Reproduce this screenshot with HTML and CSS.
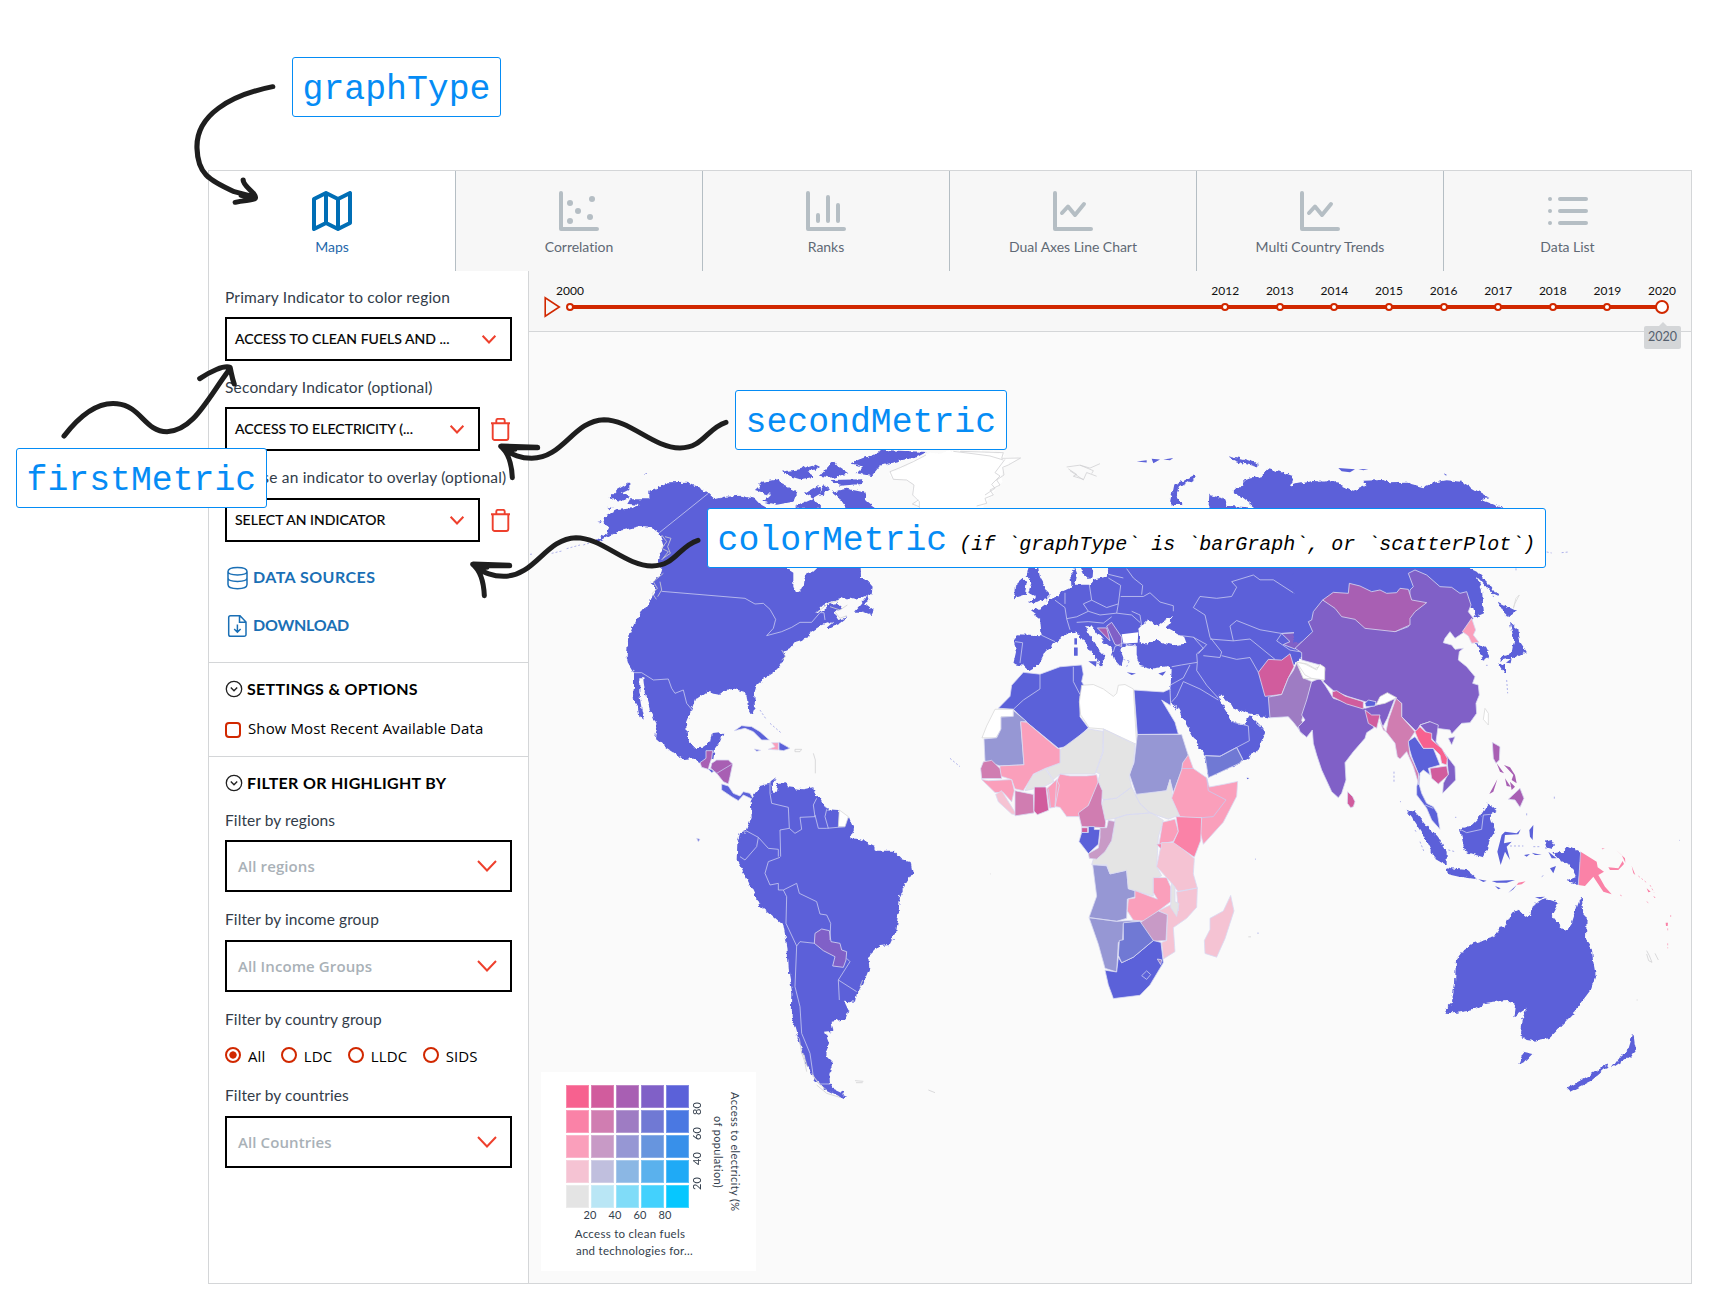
FILE: index.html
```html
<!DOCTYPE html>
<html lang="en">
<head>
<meta charset="utf-8">
<title>Data Explorer</title>
<link rel="stylesheet" href="styles.css">
</head>
<body>
<svg width="0" height="0" class="defs">
  <defs>
    <symbol id="chev" viewBox="0 0 20 12"><path d="M1 1 L10 10.5 L19 1" fill="none" stroke="#ee402d" stroke-width="2"/></symbol>
    <symbol id="chevs" viewBox="0 0 20 12"><path d="M1.500 1 L10 10 L18.500 1" fill="none" stroke="#ee402d" stroke-width="2.700"/></symbol>
    <symbol id="trash" viewBox="0 0 20 23"><path d="M0.5 5.2H19.5M2.2 5.2V20a2 2 0 0 0 2 2H15.8a2 2 0 0 0 2-2V5.2M5.8 5V2.5a1.6 1.6 0 0 1 1.6-1.6H12.6a1.6 1.6 0 0 1 1.6 1.6V5" fill="none" stroke="#ee402d" stroke-width="1.900"/></symbol>
    <symbol id="fold" viewBox="0 0 18 18"><circle cx="9" cy="9" r="7.7" fill="none" stroke="#222" stroke-width="1.3"/><path d="M5.8 7.5 L9 10.7 L12.2 7.5" fill="none" stroke="#222" stroke-width="1.4"/></symbol>
    <symbol id="line" viewBox="0 0 40 40"><path d="M2 2V38H38M9 22L15 15.500L22 24L31 13" fill="none" stroke="#b5bec4" stroke-width="4" stroke-linecap="round" stroke-linejoin="round"/></symbol>
  </defs>
</svg>

<main class="frame">
  <nav class="tabs">
    <a class="tab on"><svg viewBox="0 0 40 40"><path d="M2 8 L14 2 L26 8 L38 2 V32 L26 38 L14 32 L2 38 Z M14 2V32M26 8V38" fill="none" stroke="#006eb5" stroke-width="4" stroke-linejoin="round"/></svg><span>Maps</span></a>
    <a class="tab"><svg viewBox="0 0 40 40"><path d="M2 2V38H38" fill="none" stroke="#b5bec4" stroke-width="4" stroke-linecap="round" stroke-linejoin="round"/><g fill="#b5bec4"><circle cx="11" cy="12" r="3"/><circle cx="33" cy="8" r="3"/><circle cx="19" cy="20" r="3"/><circle cx="31" cy="26" r="3"/><circle cx="11" cy="30" r="3"/></g></svg><span>Correlation</span></a>
    <a class="tab"><svg viewBox="0 0 40 40"><path d="M2 2V38H38M12 24V30M22 6V30M32 14V30" fill="none" stroke="#b5bec4" stroke-width="4" stroke-linecap="round" stroke-linejoin="round"/></svg><span>Ranks</span></a>
    <a class="tab"><svg><use href="#line"/></svg><span>Dual Axes Line Chart</span></a>
    <a class="tab"><svg><use href="#line"/></svg><span>Multi Country Trends</span></a>
    <a class="tab"><svg viewBox="0 0 40 40"><path d="M12 8H38M12 20H38M12 32H38M2 8h.01M2 20h.01M2 32h.01" fill="none" stroke="#b5bec4" stroke-width="4" stroke-linecap="round"/></svg><span>Data List</span></a>
  </nav>

  <div class="body">
    <aside class="side">
      <section class="sec indicators">
        <div class="lbl l1">Primary Indicator to color region</div>
        <div class="sel"><span>ACCESS TO CLEAN FUELS AND ...</span><svg><use href="#chevs"/></svg></div>
        <div class="lbl l2">Secondary Indicator (optional)</div>
        <div class="row"><div class="sel"><span>ACCESS TO ELECTRICITY (...</span><svg><use href="#chevs"/></svg></div><svg class="trash"><use href="#trash"/></svg></div>
        <div class="lbl l3">Choose an indicator to overlay (optional)</div>
        <div class="row third"><div class="sel"><span>SELECT AN INDICATOR</span><svg><use href="#chevs"/></svg></div><svg class="trash"><use href="#trash"/></svg></div>
        <a class="link"><svg viewBox="0 0 24 24"><path d="M3 5.500C3 0 22 0 22 5.500C22 10 3 10 3 5.500V18.500C3 24 22 24 22 18.500V5.500M3 12C3 16.500 22 16.500 22 12" fill="none" stroke="#1a6fb5" stroke-width="1.500"/></svg><span class="k1">DATA SOURCES</span></a>
        <a class="link"><svg viewBox="0 0 24 24"><path d="M5.500 1.800H15L21 8V20.500a1.800 1.800 0 0 1-1.800 1.800H5.500a1.800 1.800 0 0 1-1.800-1.800V3.600a1.800 1.800 0 0 1 1.800-1.800ZM14.500 2V8.300H21M12.400 10.500V18M9.200 15L12.400 18.200L15.600 15" fill="none" stroke="#1a6fb5" stroke-width="1.500"/></svg><span class="k2">DOWNLOAD</span></a>
      </section>
      <section class="sec settings">
        <h2><svg><use href="#fold"/></svg><span>SETTINGS &amp; OPTIONS</span></h2>
        <label class="check"><i></i><span>Show Most Recent Available Data</span></label>
      </section>
      <section class="sec filters">
        <h2><svg><use href="#fold"/></svg><span>FILTER OR HIGHLIGHT BY</span></h2>
        <div class="lbl">Filter by regions</div>
        <div class="sel big"><span>All regions</span><svg><use href="#chev"/></svg></div>
        <div class="lbl">Filter by income group</div>
        <div class="sel big low"><span>All Income Groups</span><svg><use href="#chev"/></svg></div>
        <div class="lbl">Filter by country group</div>
        <div class="radios"><label class="on"><i></i>All</label><label><i></i>LDC</label><label><i></i>LLDC</label><label><i></i>SIDS</label></div>
        <div class="lbl">Filter by countries</div>
        <div class="sel big low"><span>All Countries</span><svg><use href="#chev"/></svg></div>
      </section>
    </aside>

    <div class="main">
      <div class="time">
        <svg class="play" viewBox="0 0 17 22"><path d="M1.200 1.800V20.200L15.300 11Z" fill="none" stroke="#d12800" stroke-width="1.600"/></svg>
        <div class="track">
          <div class="mark" style="left:0%"><b>2000</b><i></i></div>
          <div class="mark" style="left:60%"><b>2012</b><i></i></div>
          <div class="mark" style="left:65%"><b>2013</b><i></i></div>
          <div class="mark" style="left:70%"><b>2014</b><i></i></div>
          <div class="mark" style="left:75%"><b>2015</b><i></i></div>
          <div class="mark" style="left:80%"><b>2016</b><i></i></div>
          <div class="mark" style="left:85%"><b>2017</b><i></i></div>
          <div class="mark" style="left:90%"><b>2018</b><i></i></div>
          <div class="mark" style="left:95%"><b>2019</b><i></i></div>
          <div class="mark now" style="left:100%"><b>2020</b><i></i><em>2020</em></div>
        </div>
      </div>
      <div class="map">
        <svg class="world" viewBox="529 332 1162 951">
          <filter id="coast" x="-5%" y="-5%" width="110%" height="110%"><feTurbulence type="fractalNoise" baseFrequency=".06" numOctaves="3" seed="4"/><feDisplacementMap in="SourceGraphic" scale="16" xChannelSelector="R" yChannelSelector="G"/></filter>
          <!-- North and Central America -->
          <g transform="translate(600 430) scale(.33333)">
            <g class="c5">
              <path class="n" d="M148 182L175 172 205 160 262 158 295 172 325 190 345 208 375 200 425 197 465 207 485 228 500 236 560 300 553 411 580 428 580 470 588 487 600 484 612 460 615 435 640 425 655 411 660 340 700 300 760 400 782 413 783 440 805 455 818 470 815 490 790 500 765 510 740 503 700 513 670 525 645 550 665 540 690 522 712 520 725 530 702 550 715 570 745 562 722 580 685 598 680 590 700 573 665 585 627 610 622 625 588 635 572 655 550 665 555 685 543 703 525 725 495 745 470 765 463 790 465 830 455 858 445 840 440 800 432 785 400 776 375 780 360 792 320 785 285 810 275 838 258 880 262 925 280 952 310 950 330 937 335 912 370 908 360 935 345 955 340 985 300 1000 275 985 250 988 200 955 165 925 172 890 150 840 135 790 130 745 118 745 118 790 125 840 132 872 118 860 112 820 98 805 102 770 102 728 85 700 80 680 85 620 108 570 150 515 165 480 155 455 178 440 185 411 172 390 190 350 178 310 150 290 120 288 60 302 0 332 -25 340 20 310 28 295 15 285 10 262 50 240 95 235 120 225 82 222 90 208 148 208Z"/>
              <path class="n" d="M25 205L50 180 85 160 85 180 65 190 90 200 60 212ZM-8 278L8 277 5 283ZM130 132L145 130 140 135ZM25 230L38 235 32 238ZM465 180L490 155 540 147 550 165 592 185 580 215 530 224 490 215 510 195ZM755 100L790 85 830 70 850 60 980 66 950 82 900 92 840 107 815 138 770 130 790 110ZM695 185L740 176 792 187 800 212 830 236 740 236 720 205ZM545 125L600 118 640 104 660 113 620 125 645 140 600 148 575 140ZM615 190L655 165 665 188 640 203ZM690 150L790 148 785 162 720 167ZM588 228L640 205 665 236 600 236ZM660 137L700 92 712 108 745 130 700 144ZM670 160L690 175 660 202ZM762 545L785 520 805 492 808 510 795 520 822 540 815 555 790 545Z"/>
              <path d="M365 1062L385 1068 400 1090 420 1098 430 1085 450 1090 462 1110 445 1102 430 1095 415 1112 395 1100 365 1080ZM322 1015L345 1022 335 1028ZM403 902L425 887 455 890 480 905 508 930 485 930 460 905 435 895ZM537 936L570 955 550 962 537 960ZM463 957L482 961 470 964ZM290 1225L300 1228 295 1235Z"/>
              <path class="isl" d="M-210 373L-200 372M-145 370L-110 362M-100 356L-60 345M-50 345L-20 335M480 840L500 870M510 880L545 910M1050 985L1080 1010"/>
            </g>
            <path class="c3" d="M318 962H338L335 985 328 1005 325 1018 305 1012 300 998 318 985ZM335 1000L350 990 385 990 398 1002 390 1040 385 1062 370 1055 350 1030 332 1015Z"/>
            <path class="p3" d="M515 938H535V960L505 958 525 950Z"/>
            <path class="none n" d="M870 130L900 115 940 95 980 75 1060 62 1210 68 1215 80 1262 85 1210 110 1200 160 1160 215 1140 250 960 250 940 200 942 165 920 150 875 145Z"/>
            <path class="fj" d="M978 75L940 95 900 113 870 125 880 148 920 150 942 165 938 195 958 215 958 235M1060 64l50 6 60 8 40 12M1080 64L1210 68 1205 85 1262 84 1225 105 1208 112 1212 135 1190 150 1200 165 1170 180 1180 195 1155 205 1160 220 1130 228M1215 88l-30 40 15 10-25 25 10 12-30 20M955 210l-18 12 20 8M585 958h20l-5 7h-15z"/>
            <path class="fj" d="M185 315l15 20-15 20 20 10-20 25M195 320l18 5-10 25 8 20-22 15M190 430l-30 25 12 20-15 15 12 18M180 455l5 25-12 20M690 530l30 10 22-15M705 545l15 20 20-8M655 545l30-25 30-8M545 660l12 20-12 10M640 970l6 20v40"/>
            <path class="b" d="M325 190L178 308M185 484L435 505 465 522 490 520 510 538 527 568 520 595 500 617 545 605 575 592 600 577 635 577 660 548 672 548 675 570M102 728L125 728 160 750 205 747 215 775 225 790 250 780 260 820 275 838M332 1015L350 1030 395 1003"/>
          </g>
          <!-- South America -->
          <g transform="translate(700 760) scale(.33333)">
            <path class="c5 n" d="M152 120L165 100 185 72 210 68 228 55 215 75 218 98 228 98 232 72 258 70 265 82 310 88 340 82 345 105 365 120 380 148 415 150 435 190 447 172 462 210 450 235 480 238 525 258 530 272 580 272 605 298 632 306 638 340 615 375 600 410 596 455 585 520 570 552 540 555 505 590 508 625 490 670 470 700 465 725 432 722 445 750 435 778 395 785 400 812 375 815 388 850 375 885 398 908 388 940 390 970 405 990 445 1008 430 1015 380 990 345 960 320 915 303 860 290 825 275 770 277 700 268 650 262 560 250 495 215 465 178 435 150 375 125 325 110 300 112 250 120 220 138 212 155 170Z"/>
            <path class="none" d="M418 150L445 170 435 200 415 200Z"/>
            <path class="c4" d="M345 520L365 507 388 512 393 545 420 550 425 570 440 575 438 600 430 622 398 618 405 590 370 572 343 550Z"/>
            <path class="b" d="M210 68V100L215 130 265 142 268 205 285 220 305 208 300 172 345 170 340 135 350 115M345 165L355 205 380 205 435 200M380 148L375 170 385 205M268 205L240 210 242 290M138 212L175 232 205 265 235 268V290M175 232L170 260 135 300 120 290M240 292L205 305 195 340 210 375 235 370V390H250L290 370 298 400 350 425 360 462 380 465 392 490 390 540M250 390L260 410 258 490 290 558 300 545 345 550M290 558L285 680 300 740 305 820 330 880 340 950 360 972H390M440 595L450 605 415 660 470 695M415 660L418 720"/>
            <path class="fj" d="M465 962l25 2M468 968h20M685 990l20 8M298 835l6 40 10 30 6 30M310 880l12 40M335 940l20 30 25 20M350 975l30 25 40 12M488 660l-8 20"/>
          </g>
          <!-- Europe, Central Asia, Middle East, Africa -->
          <g transform="translate(960 430) scale(.33333 .36995)">
            <path class="c5 n" d="M745 212L748 175 790 185 800 205 885 210 820 165 850 150 850 135 905 125 920 105 970 115 1000 125 990 150 1060 138 1140 142V520L1020 620 1000 640 940 720 930 778 860 765 810 745 785 715 775 725 800 760 815 790 850 795 868 772 900 800 915 820 890 870 840 900 745 940 735 880 700 830 650 750 628 735 635 650 625 638 580 645 540 635 530 610 530 585 500 582 480 592 490 615 485 640 465 620 455 590 430 570 398 532 378 530 385 550 412 590 435 612 422 642 412 625 395 600 370 570 355 550 335 545 300 565 280 578 255 600 235 635 205 650 190 637 160 632 168 600 162 570 170 552 245 555 240 510 210 490 240 482 272 460 295 450 310 435 335 425 330 390 345 373 352 390 345 418 388 418 400 405 440 395 445 372 445 300 620 300Z"/>
            <path class="c5 n" d="M205 373L235 373 240 400 265 440 265 457 205 470 225 450 205 440 215 410 200 395ZM165 420L185 405 200 410 195 445 162 455ZM360 373L400 373 398 398 375 400ZM630 195L640 150 700 123 708 130 660 155 650 180 670 203 640 203ZM805 68L850 78 900 92 890 100 830 85Z"/>
            <path class="c5 q" d="M343 563H351V580H343ZM342 588H353V610H342ZM385 625L410 625 408 640ZM500 655L528 658 515 662ZM595 658L618 652 608 664ZM530 85L560 82 560 88ZM575 78L600 80 580 90ZM610 80L640 76 630 82ZM860 940L868 941 862 944Z"/>
            <path class="sea n" d="M540 575L535 540 565 512 590 532 605 520 640 503 618 535 670 560 677 578 640 582 590 570 560 580Z"/>
            <path class="none q" d="M485 552L535 547 533 575 490 577Z"/>
            <path class="c5" d="M190 655L240 660 300 640 365 635 370 660 365 680 375 695 360 720V775L385 805 325 855 295 860 200 790 160 755 115 752 150 720 155 690ZM522 703L610 708 630 700 632 745 605 730 645 790 655 822 532 823Z"/>
            <path class="none" d="M365 690L400 688 430 700 460 720 470 712 475 690 495 688 520 700 530 850 430 808 388 805 362 770 358 735ZM105 755H160V775H123V810L108 832H66L80 800Z"/>
            <path class="b3" d="M160 758L200 788 182 790 192 905 120 908 75 895 72 835 110 832 123 808V776L160 774ZM532 823H665L685 880 665 920 640 980 630 945 620 975 530 988 508 930 522 900ZM398 1175L440 1178 450 1200 500 1190 505 1240 525 1245V1262L502 1268 500 1320 470 1328 387 1318 410 1260ZM387 1318L470 1328 535 1325 490 1335 488 1380 475 1385 470 1465 435 1455 415 1390Z"/>
            <path class="g0" d="M300 865L385 808 430 815 428 870 405 930H300L280 945 258 915 300 900ZM430 808L525 850 520 900 508 935 515 965 470 995 430 1000 410 960 420 930 408 925 430 870ZM430 1000L470 995 515 965 540 1010 570 1035 500 1040 465 1050 430 1055 420 1030ZM525 985L620 975 630 945 640 1000 660 1040 625 1052 570 1035 540 1010ZM195 975L215 935 255 915 282 950 250 965ZM465 1050L500 1040 575 1035 610 1055 595 1100 590 1180 605 1205 580 1215V1260L505 1240 500 1190 450 1200 440 1175H395L400 1160 440 1130 460 1090Z"/>
            <path class="p3" d="M182 788L200 790 292 860 300 862V900L255 915 220 930 190 975 165 970 155 945 120 935V908L192 905ZM65 945L85 948 155 945 163 975 155 1005 130 980 105 980ZM260 970L290 945 298 960 285 1020 268 1022ZM300 930L330 935 380 935 410 932 415 955 385 1015 360 1045 320 1045 300 1020 285 1018 290 950ZM665 918L668 900 685 878 700 915 740 940 748 965 790 958 833 950 830 990 790 1060 730 1120 720 1085 725 1048 700 1050 660 1045 635 995ZM608 1060L645 1052 655 1085 640 1112 597 1120ZM580 1210H620L632 1235V1275L595 1300 555 1328 520 1325 502 1300 505 1268 525 1265V1245L592 1268 580 1250Z"/>
            <path class="p4" d="M107 985L125 975 135 990 170 1040 155 1038 115 1005ZM605 1115H645L703 1158 700 1200 712 1238 655 1248 630 1220 590 1180ZM650 1248L712 1238 710 1290 680 1320 640 1345 645 1410 610 1430 605 1385 620 1380 622 1310 595 1300 640 1280 655 1300ZM812 1258L822 1300 795 1375 770 1425 735 1415 733 1380 750 1350 750 1320 790 1300Z"/>
            <path class="g0" d="M635 1225L645 1235V1275L657 1280 650 1315 632 1290Z"/>
            <path class="m2" d="M70 897L95 893 120 915 125 942H65L62 915ZM165 975L220 985 222 1035 165 1043ZM415 950L427 975 425 1010 437 1060 435 1075 365 1072 355 1035 385 1015Z"/>
            <path class="m1" d="M223 965H258L266 1028 232 1040 222 1030ZM365 1075H383V1088H365ZM895 655L925 620 965 622 990 605 1002 640 985 670 965 715 915 720Z"/>
            <path class="m3" d="M420 1075H440L445 1055 465 1058 455 1110 435 1140 410 1160 388 1158 385 1145 415 1130 420 1100ZM540 1332L595 1300 622 1310 618 1380 580 1382Z"/>
            <path class="c5" d="M365 1088L385 1088V1072H403V1080H420L415 1120 385 1145 357 1112ZM435 1460L470 1465 475 1425 485 1440 520 1425 580 1380 603 1385 610 1440 570 1500 540 1528 460 1537 445 1500Z"/>
            <path class="p2" d="M648 1045L725 1048 722 1110 703 1155 640 1115 655 1085ZM590 1120L605 1118 603 1132Z"/>
            <path class="b2" d="M490 1332L540 1328 580 1380 520 1425 485 1440 475 1420 478 1380 490 1378ZM735 880L780 882 830 858 848 890 840 900 745 940Z"/>
            <path class="c4" d="M965 550L1055 545 1005 592 970 580 990 572ZM440 530L455 520 485 560V585L465 580Z"/>
            <path class="c3" d="M412 535H440L450 570Z"/>
            <path class="m2b" d="M592 1430L605 1432 602 1445ZM925 722L965 715 985 670 1000 650 1010 630 1030 670 1055 680 1040 740 1025 785 1035 800 1030 825 1000 790 985 775 930 778Z"/>
            <path class="b" d="M700 915L665 915M740 940L745 975 798 1000 760 1045 725 1048M240 660L240 700 190 730 160 755M340 640L340 680 360 715M545 1475L560 1462 572 1472 560 1485 545 1475M165 572L188 575 180 630M245 555L285 572M285 460L315 480 320 510 330 540M315 440L315 470M388 418L395 460 370 470 385 490 350 505 320 510M395 460L440 480 475 470 482 420 445 400M475 470L470 495 420 500 385 490M470 495L515 500 540 520M482 450L550 450 570 440 600 465 640 475 640 490M515 490L540 500 545 530M545 445L548 420 520 400 500 375M445 390L490 400M350 520L385 518 430 522 455 505M530 585L490 575 465 585 460 600M635 640L665 635 712 628 710 605 730 590 700 560 655 555M730 610L780 615 785 600 750 560 735 500 700 480 720 450 770 455 815 450 830 425 815 410 880 392 900 405 940 405 1000 440 1050 450 1085 460 1055 490 1055 545 965 550 950 570 990 595 1025 600M785 610L830 620 870 615 895 655M750 565L820 570 810 530 830 515 900 540 965 550M820 570L870 565 945 620M630 690L670 670 690 635M670 680L720 700 775 730M670 680L650 720 635 735M712 628L710 650 740 690 775 725M735 880L780 882 830 858 868 840 865 800 820 790M848 890L830 858M700 560L740 580 715 605M265 970L272 1022"/>
            <path class="none" d="M1010 628L1040 632 1065 645 1090 635 1095 680 1060 672 1030 672Z"/>
            <path class="fj" d="M320 100l40-5 30 8 30-12M330 110l40 25 10-20 30 10M325 105l25 15-10 5 30 8M360 95l40 15-5 8M90 1200h2M865 1370h8"/>
            <path class="isl c5" d="M892 1360h4M885 1160h3M500 640l10-20M490 620l20 5"/>
          </g>
          <!-- East Asia -->
          <g transform="translate(1300 430) scale(.33333)">
            <path class="c5 n" d="M-20 165L0 162 20 166 50 155 100 154 160 182 200 165 190 152 250 150 270 160 320 158 370 172 400 158 440 151 485 155 565 202 540 208 610 235 500 300 500 411 525 430 545 475 552 550 525 562 500 485 420 600 -20 640Z"/>
            <path class="c5 n" d="M500 411L530 425 565 460 595 502 580 495 540 450ZM593 515L648 542 625 560 610 545ZM630 578L655 600 660 635 680 665 650 680 600 692 610 675 635 668 642 630ZM595 703L615 700 615 732ZM527 638L555 650 570 680 550 692 540 665Z"/>
            <path class="c5 q" d="M618 698L635 685 632 700ZM115 114L165 118 150 127 125 124ZM175 117L205 118 190 121ZM432 130L442 136 435 136Z"/>
            <path class="c4" d="M68 510L40 545 35 570 25 575 38 605-15 655 5 668 5 690 60 705 75 715 70 755 100 782 145 800 195 815 230 822 250 800 285 805 305 820 305 860 350 905 360 885 390 875 410 895 450 900 455 912 485 880 510 878 530 850 528 820 538 795 535 765 518 760 525 740 500 710 475 690 478 665 490 655 465 658 455 645 430 638 435 625 450 605 465 625 490 608 520 565 505 545 513 525 500 485 480 490 455 472 420 470 380 435 345 420 325 430 340 470 330 480 325 590 285 605Z"/>
            <path class="c4" d="M35 755L60 745 75 765 100 805 195 835 240 822 285 805 262 865 248 892 238 860 220 895 200 908 195 925 160 965 135 998 138 1050 125 1090 115 1103 95 1085 65 1020 50 975 40 940 37 900 20 922 0 905-5 890 15 870 5 855 20 810ZM360 885L390 875 415 885 408 935 465 1010 467 1050 428 1090 430 1060 445 1030 440 980 395 925ZM445 925L465 920 455 945Z"/>
            <path class="c3" d="M68 510L100 487 145 490 148 460 180 468 215 485 240 480 260 490 290 488 300 475 325 478 335 510 380 518 345 545 330 565 330 585 285 605 195 595 165 568 125 560 105 535ZM577 937L600 950 598 990 588 1000 580 985ZM625 1108L660 1075 672 1105 660 1132 645 1110Z"/>
            <path class="c3 q" d="M590 1000L612 1030 600 1025ZM615 1045L632 1070 620 1068ZM612 1005L630 1012 645 1035 650 1060 635 1050 640 1035ZM568 1092L592 1048 580 1085ZM630 1055L645 1070 635 1080Z"/>
            <path class="none" d="M228 825L240 800 262 788 290 803 255 820ZM555 835L565 850 565 885 550 868ZM658 495L645 520 640 535 648 505ZM-10 697L15 702 50 720 60 703 74 712V750L35 745 15 735Z"/>
            <path class="m1" d="M97 785L110 782 135 798 190 815V837L140 822 97 800ZM195 840L215 855 240 855 230 895 205 880ZM240 875L258 905 250 900ZM390 1015L440 1008 445 1035 415 1062 395 1045ZM143 1085L158 1100 165 1115 160 1130 152 1133 142 1120Z"/>
            <path class="c5" d="M195 820L205 810 228 815 225 828 198 830ZM322 935L345 920 370 955 400 955 420 1005 385 1015 390 1035 370 1020 360 1030 358 1065 365 1090 380 1120 400 1130 412 1150 420 1198 395 1170 380 1135 350 1095 350 1070 358 1040 335 980Z"/>
            <path class="m2" d="M288 805L305 820 305 860 345 905 325 935 330 975 355 1030 357 1065 340 1010 320 965 300 987 292 980 285 940 258 905 265 870Z"/>
            <path class="p1" d="M345 905L360 890 375 905 395 910 395 930 425 955 442 985 440 1005 425 1000 420 975 400 955H370L355 930Z"/>
            <path class="p3" d="M487 605L515 565 527 600 520 615 537 637 515 640 505 618Z"/>
            <path class="isl c5" d="M620 750l3 40M740 366l15 3M785 368l20-2M648 415v12M282 1025v30M558 706h5M300 1115h3M763 1100v6"/>
          </g>
          <!-- Maritime South-East Asia and Oceania -->
          <g transform="translate(1300 780) scale(.33333)">
            <path class="c5 n" d="M320 90L345 95 375 130 415 175 440 215 440 255 405 235 370 165 345 125ZM480 148L510 140 540 110 565 68 590 90 570 105 585 150 572 170 558 215 550 232 495 215ZM440 262L465 266 500 270 532 298 480 290 443 282ZM735 185L755 180 765 195 755 207 740 203ZM775 237L760 220 790 215 805 197 842 215 835 315 800 302 830 290 812 255Z"/>
            <path class="c5 q" d="M605 165L615 155 650 160 662 148 655 163 615 165 612 190 635 185 620 200 630 240 615 215 602 255 592 215ZM535 298L560 302 550 306ZM575 303L645 300 620 308 590 308ZM585 318L602 325 595 328ZM625 338L650 315 640 328ZM672 225L690 222 680 230ZM695 218L725 225 705 225ZM745 215L770 235 755 235ZM688 150L700 135 698 180 690 170ZM750 265L768 258 760 280ZM705 352L735 350 720 357Z"/>
            <path class="c5 n" d="M438 685L455 670 465 610 468 540 490 510 520 490 580 472 605 435 612 445 635 400 660 388 672 412 690 405 700 375 735 355 775 368 755 405 795 455 810 445 825 400 835 370 845 347 850 400 860 410 858 480 875 505 880 545 887 585 870 635 825 695 750 773 700 783 680 780 660 765 665 720 680 685 640 712 645 675 620 660 560 668 520 690 460 700 440 698ZM655 855L670 815 700 822 680 842ZM800 925L870 885 922 853 918 865 870 905 810 935ZM935 865L960 830 985 808 1000 758 1004 790 1010 815 985 832Z"/>
            <path class="p2 q" d="M842 215L890 245 893 262 912 275 895 285 915 320 935 343 910 335 880 290 855 318 835 315Z"/>
            <path class="p2 q" d="M925 262L955 265 968 243 972 252 955 270 930 270ZM948 210L975 235 976 248 965 225ZM995 258L1006 285 1000 280ZM1040 325L1052 335 1045 337ZM905 205L915 206 907 208ZM1060 347L1067 353 1063 353ZM650 315L655 308 677 304 665 313ZM1097 428L1104 428 1103 438 1098 438Z"/>
            <path class="isl p2" d="M1015 288l25 20M1050 315l12 22M1103 445v10M1112 405v12M1103 490v15M960 345l10 5M1040 365l6 4"/>
            <path class="fj" d="M1040 512l8 15 8 20-10-5-6-20M1065 520l10 20M1010 660h3"/>
            <path class="isl c5" d="M345 150l6 10M360 185l12 30M630 198h40M700 200h20M725 290l8-5M445 210l20 5M680 100v8M1138 181h2M465 112h4"/>
            <path class="b" d="M480 148L500 158 545 148 550 105 572 103M375 75L400 85M842 215L835 315"/>
          </g>
        </svg>

        <div class="legend">
          <div class="matrix">
            <div class="cells">
              <i style="background:#f7618f"></i><i style="background:#d15c9d"></i><i style="background:#a85fb3"></i><i style="background:#8060c7"></i><i style="background:#5b61d9"></i>
              <i style="background:#fa82a7"></i><i style="background:#d07db1"></i><i style="background:#9e7cc3"></i><i style="background:#7079d4"></i><i style="background:#4a78e2"></i>
              <i style="background:#fa9fbb"></i><i style="background:#c89ac6"></i><i style="background:#9697d4"></i><i style="background:#6795de"></i><i style="background:#3890ea"></i>
              <i style="background:#f5c3d3"></i><i style="background:#c0bfde"></i><i style="background:#8bb7e4"></i><i style="background:#5ab1ed"></i><i style="background:#1faaf6"></i>
              <i style="background:#e4e4e4"></i><i style="background:#b9e6f5"></i><i style="background:#80dcf8"></i><i style="background:#43d1fd"></i><i style="background:#06c7ff"></i>
            </div>
            <div class="vticks"><span>80</span><span>60</span><span>40</span><span>20</span></div>
            <div class="vtitle">Access to electricity (%<br>of population)</div>
          </div>
          <div class="hticks"><span>20</span><span>40</span><span>60</span><span>80</span></div>
          <div class="htitle">Access to clean fuels<br><span>and technologies for...</span></div>
        </div>
      </div>
    </div>
  </div>
</main>

<svg class="arrows" viewBox="0 0 1717 1304" fill="none" stroke="#1e1e1e" stroke-linecap="round" stroke-linejoin="round">
  <path transform="translate(0 40) scale(.3444 .3333)" stroke-width="15" d="M792 140C670 165 568 225 572 325C574 400 605 420 680 455L735 470M706 420C706 440 748 462 741 475C735 482 710 480 683 487M700 466L735 474"/>
  <path transform="translate(0 280) scale(.3444 .3333)" stroke-width="15" d="M186 468C240 395 290 365 340 371C410 378 420 455 485 455C560 452 600 360 665 270M580 296C610 275 650 255 668 262C672 280 674 295 680 312"/>
  <g id="wave" stroke-width="15"><path transform="translate(460 380) scale(.3333)" d="M798 127C740 145 730 204 660 204C580 204 510 119 432 119C340 122 310 235 215 235C180 235 160 225 130 207M233 203H145Q128 198 122 199C142 215 155 250 157 293M233 202L124 198M140 206L165 208"/></g>
  <use href="#wave" x="-28" y="118"/>
</svg>
<div class="tag t1">graphType</div>
<div class="tag t2">firstMetric</div>
<div class="tag t3">secondMetric</div>
<div class="tag t4">colorMetric<em>(if `graphType` is `barGraph`, or `scatterPlot`)</em></div>
</body>
</html>
```
FILE: styles.css
```css
* { box-sizing: border-box; }
body { margin: 0; width: 1717px; height: 1304px; position: relative; overflow: hidden; background: #fff; font-family: Lato, "Open Sans", sans-serif; color: #000; }
i, em, b { font-style: normal; font-weight: 400; }
.defs { position: absolute; }
.frame { margin: 170px 0 0 208px; width: 1484px; height: 1114px; border: 1px solid #d4d6d8; position: absolute; background: #fff; }
.tabs { display: grid; grid-template-columns: repeat(6, 1fr); height: 100px; }
.tab { display: flex; flex-direction: column; align-items: center; padding-top: 20px; background: #f7f7f7; border-right: 1px solid #b5bec4; color: #5f6975; font-size: 14px; }
.tab:last-child { border-right: 0; }
.tab svg { width: 40px; height: 40px; }
.tab span { margin-top: 7px; line-height: 18px; letter-spacing: -.03px; }
.tab.on { background: #fff; color: #1f68ab; }
.body { display: flex; height: 1012px; }
.side { width: 320px; border-right: 1px solid #d4d6d8; }
.sec { padding: 0 16px; border-bottom: 1px solid #d4d6d8; }
.indicators { height: 392px; padding-top: 16px; }
.settings { height: 94px; padding-top: 16px; }
.filters { border-bottom: 0; padding-top: 16px; }
.lbl { font-size: 15.500px; line-height: 20px; height: 20px; margin-bottom: 10px; white-space: nowrap; color: #323c49; letter-spacing: .09px; }
.indicators .lbl { letter-spacing: .19px; }
.l3 { margin-bottom: 11px; }
.sel { display: flex; align-items: center; justify-content: space-between; height: 44px; width: 287px; border: 2px solid #000; padding: 0 13px 0 8px; margin-bottom: 16px; font-size: 14px; white-space: nowrap; -webkit-text-stroke: .2px #000; letter-spacing: .03px; }
.sel span { margin-top: -2px; }
.sel svg { width: 16px; height: 9px; }
.row { display: flex; gap: 10px; }
.row .sel { width: 255px; }
.trash { width: 21px; height: 23px; margin-top: 11px; }
.third { margin-bottom: 8px; }
.link { display: flex; gap: 4px; align-items: center; height: 24px; margin-bottom: 24px; color: #1a6fb5; font-size: 16px; font-weight: 700; }
.link svg { width: 24px; height: 24px; }
.link span { margin-top: -3px; }
.k1 { letter-spacing: .45px; }
.k2 { letter-spacing: -.22px; }
h2 { margin: 0; height: 20px; display: flex; align-items: center; gap: 4px; font-size: 16px; font-weight: 700; line-height: 20px; white-space: nowrap; letter-spacing: .32px; }
h2 svg { width: 18px; height: 18px; }
.check { display: flex; align-items: center; gap: 7px; margin-top: 21px; height: 20px; font: 15px/20px "Open Sans", sans-serif; white-space: nowrap; letter-spacing: .11px; }
.check i { width: 16px; height: 16px; border: 2px solid #d12800; border-radius: 4px; }
.check span { margin-top: -5px; }
.filters h2 { margin-bottom: 17px; }
.sel.big { height: 52px; padding: 0 13px 0 11px; color: #a9b1b7; font: 600 15px "Open Sans", sans-serif; -webkit-text-stroke: 0; letter-spacing: .1px; margin-bottom: 17px; }
.big span { margin-top: 0; }
.big svg { width: 20px; height: 12px; }
.low { margin-top: 11px; }
.filters .low ~ .lbl { margin-top: 17px; }
.radios { display: flex; height: 20px; margin: 17px 0 19px; font: 15px/20px "Open Sans", sans-serif; letter-spacing: .1px; }
.filters .radios ~ .lbl { margin-top: 0; }
.radios label { display: flex; align-items: center; margin-right: 15.500px; }
.radios i { width: 16px; height: 16px; border: 2px solid #d12800; border-radius: 50%; margin-right: 7px; margin-top: -2px; }
.radios .on i { background: radial-gradient(circle, #d12800 3.300px, transparent 4px); }
.main { flex: 1; display: flex; flex-direction: column; background: #fafafa; }
.time { height: 61px; background: #f7f7f7; border-bottom: 1px solid #d4d6d8; display: flex; padding: 25px 29px 0 15px; }
.play { width: 17px; height: 22px; }
.track { position: relative; margin: 9px 0 0 9px; flex: 1; height: 4px; background: #d12800; }
.mark { position: absolute; top: 2px; }
.mark b { position: absolute; left: -20px; width: 40px; text-align: center; bottom: 9px; font-size: 12px; line-height: 14px; color: #111; }
.mark i { position: absolute; left: -4px; top: -4px; width: 8px; height: 8px; border: 2px solid #d12800; border-radius: 50%; background: #fff; }
.now i { left: -7px; top: -7px; width: 14px; height: 14px; }
.mark em { position: absolute; left: -18px; top: 19px; width: 37px; height: 23px; border-radius: 2px; background: #d4d6d8; text-align: center; font-size: 12.500px; line-height: 22px; color: #55606e; z-index: 2; }
.mark em::before { content: ""; position: absolute; left: 13.500px; top: -4px; border: 5px solid transparent; border-top: 0; border-bottom-color: #d4d6d8; }
.map { flex: 1; position: relative; }
.world { display: block; width: 1162px; height: 951px; }
.world path { stroke: #d9daf3; stroke-width: .8px; vector-effect: non-scaling-stroke; stroke-linejoin: round; }
.world .n { stroke: none; filter: url(#coast); }
.world .q { stroke: none; }
.world .b { fill: none; stroke: #c9cbf0; }
.world .isl { fill: none; stroke: #9a9ee6; stroke-dasharray: 2 2; }
.world .isl.p2 { stroke: #fa9fbb; }
.world .fj { fill: none; stroke: #d0d1d3; }
.world .none { fill: #fff; stroke: #d9d9d9; }
.world .none.n, .world .none.q { stroke: none; }
.sea { fill: #fafafa; }
.p1 { fill: #f7618f; } .p2 { fill: #fa82a7; } .p3 { fill: #fa9fbb; } .p4 { fill: #f5c3d3; } .g0 { fill: #e4e4e4; }
.m1 { fill: #d15c9d; } .m2 { fill: #d07db1; } .m3 { fill: #c89ac6; } .m2b { fill: #9e7cc3; }
.c3 { fill: #a85fb3; } .c4 { fill: #8060c7; } .c5 { fill: #5b61d9; } .b2 { fill: #7079d4; } .b3 { fill: #9697d4; }
.legend { position: absolute; left: 12px; top: 740px; width: 215px; height: 199px; background: #fff; padding: 13px 0 0 25px; font-size: 11px; color: #333e4c; }
.matrix { display: flex; height: 123px; }
.cells { display: grid; grid-template-columns: repeat(5, 23px); grid-auto-rows: 23px; gap: 2px; }
.cells i { box-shadow: inset 0 0 0 1px rgba(255,255,255,.25); }
.vticks { display: flex; flex-direction: column; padding-top: 11px; margin-left: 1px; }
.vticks span { writing-mode: vertical-rl; transform: rotate(180deg); width: 14px; height: 25px; line-height: 14px; text-align: center; }
.vtitle { writing-mode: vertical-rl; line-height: 17px; text-align: center; margin-left: 6px; height: 134px; white-space: nowrap; letter-spacing: .37px; }
.hticks { display: flex; padding-left: 11.500px; line-height: 14px; }
.hticks span { width: 25px; text-align: center; }
.htitle { width: 128px; margin-top: 3px; text-align: center; line-height: 17px; font-size: 11.500px; white-space: nowrap; letter-spacing: .28px; }
.htitle span { margin-left: 9px; }
.arrows { position: absolute; left: 0; top: 0; width: 1717px; height: 1304px; }
.tag { position: absolute; height: 60px; border: 1px solid #058cf5; border-radius: 3px; background: #fff; color: #058cf5; font: 34.800px/64px "Liberation Mono", monospace; padding: 0 9.500px; white-space: pre; }
.tag em { font: italic 20px "Liberation Mono", monospace; color: #000; margin-left: 12px; }
.t1 { left: 292px; top: 57px; }
.t2 { left: 16px; top: 448px; }
.t3 { left: 735px; top: 390px; }
.t4 { left: 707px; top: 508px; }
```
